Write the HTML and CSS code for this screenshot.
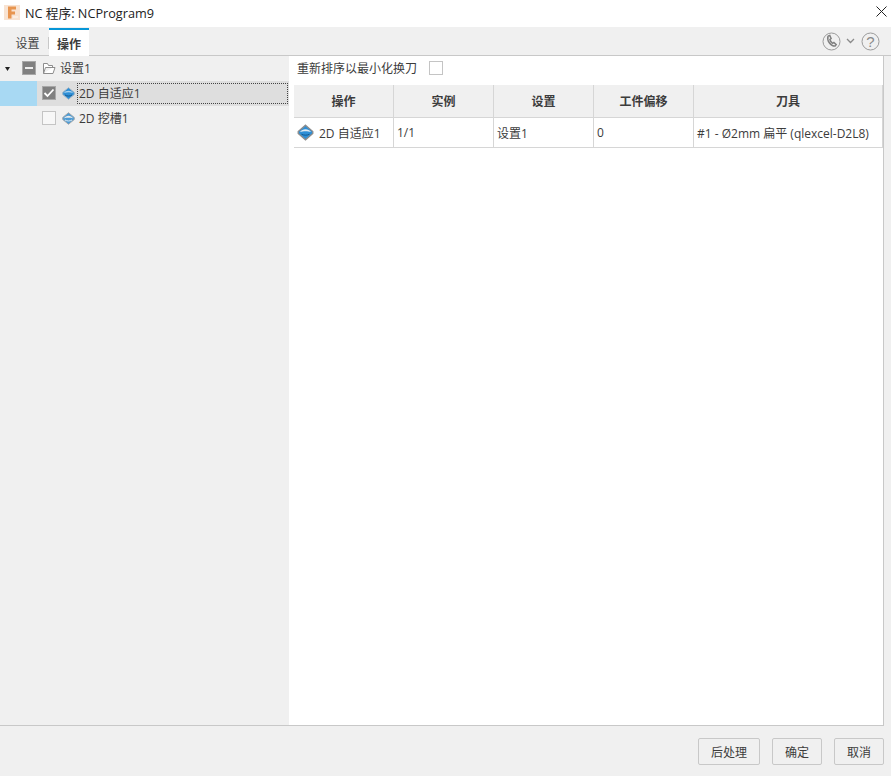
FILE: index.html
```html
<!DOCTYPE html>
<html lang="zh">
<head>
<meta charset="utf-8">
<title>NC 程序</title>
<link rel="stylesheet" href="styles.css">
</head>
<body>
<div class="window">
  <header class="titlebar">
    <svg class="app-icon" width="16" height="15" viewBox="0 0 16 15"><rect width="16" height="15" fill="#f8e3d2"/><path d="M4 1.500h8v3H7.500v2H11v3H7.500v4H4z" fill="#e8954f"/><rect x="9" y="11" width="5" height="2" fill="#fbeee2"/></svg>
    <span class="title">NC 程序: NCProgram9</span>
    <svg class="close" width="11" height="11" viewBox="0 0 11 11"><path d="M.5.500l10 10M10.500.500l-10 10" stroke="#222" stroke-width="1" fill="none"/></svg>
  </header>
  <nav class="tabbar">
    <span class="tab">设置</span>
    <span class="tab-sep"></span>
    <span class="tab active">操作</span>
    <span class="tab-tools">
      <svg width="19" height="19" viewBox="0 0 19 19"><circle cx="9.500" cy="9.500" r="8.500" fill="none" stroke="#9a9a9a"/><path d="M5.800 4.200l2-.7 1.300 3-1.200 1c.3 1.600 1.500 3 2.800 3.800l1.200-.9 2.300 2.200-1.100 1.500c-4.100.2-8.500-5.100-7.100-9.900z" fill="none" stroke="#808080" stroke-width="1.500"/></svg>
      <svg class="chev" width="9" height="6" viewBox="0 0 9 6"><path d="M1 1l3.500 3.500L8 1" fill="none" stroke="#8a8a8a" stroke-width="1.300"/></svg>
      <svg class="help" width="19" height="19" viewBox="0 0 19 19"><circle cx="9.500" cy="9.500" r="8.500" fill="none" stroke="#9a9a9a"/><text x="9.500" y="15" text-anchor="middle" class="help-q">?</text></svg>
    </span>
  </nav>
  <main class="panes">
    <aside class="tree">
      <div class="tree-row">
        <svg class="caret" width="5" height="4" viewBox="0 0 5 4"><path d="M0 0h5L2.500 4z" fill="#222"/></svg>
        <span class="check mixed"><span class="dash"></span></span>
        <svg class="folder" width="14" height="13" viewBox="0 0 14 13"><path d="M1.500 11.500V1.500h4l1 2h4v2M1.500 11.500h9.500l2-6H3.500z" fill="#fff" stroke="#8d8d8d"/></svg>
        <span class="tree-label">设置1</span>
      </div>
      <div class="tree-row selected">
        <span class="sel-bar"></span>
        <span class="check checked"><svg width="12" height="10" viewBox="0 0 12 10"><path d="M1.500 5l3 3 6-6.500" fill="none" stroke="#fff" stroke-width="1.800"/></svg></span>
        <svg class="op" width="13" height="13" viewBox="0 0 13 13"><path d="M6.500.700L12.300 5.500V7.500L6.500 12.300.700 7.500V5.500z" fill="#2f8fd6" stroke="#9fb4c4"/><path d="M2 6c1.800-3 7.200-3 9 0-2.600-.9-6.400-.9-9 0z" fill="#a9d3f0"/><path d="M3 8c2.200 1.400 4.800 1.400 7 0" stroke="#14598f" fill="none"/></svg>
        <span class="tree-label focus">2D 自适应1</span>
      </div>
      <div class="tree-row sub">
        <span class="check"></span>
        <svg class="op" width="13" height="13" viewBox="0 0 13 13"><path d="M6.500.700L12.300 5.500V7.500L6.500 12.300.700 7.500V5.500z" fill="#4d9bd4" stroke="#a4a8ab"/><path d="M2 6.200c1.800-3.400 7.200-3.400 9 0-2.600-.6-6.400-.6-9 0z" fill="#e8ebed"/><path d="M3 8c2.200 1.300 4.800 1.300 7 0" stroke="#e0ecf4" fill="none"/></svg>
        <span class="tree-label">2D 挖槽1</span>
      </div>
    </aside>
    <section class="content">
      <div class="option">
        <span>重新排序以最小化换刀</span>
        <span class="check plain"></span>
      </div>
      <table class="grid">
        <thead>
          <tr><th class="col">操作</th><th class="col">实例</th><th class="col">设置</th><th class="col">工件偏移</th><th>刀具</th></tr>
        </thead>
        <tbody>
          <tr>
            <td><span class="op-cell"><svg width="17" height="17" viewBox="0 0 17 17"><path d="M8.500 1.200L15.800 7.500V9.500L8.500 15.800 1.200 9.500V7.500z" fill="#2f8fd6" stroke="#8c8c8c" stroke-width="1.300"/><path d="M3 8c2.500-3.600 8.500-3.600 11 0-3-1-8-1-11 0z" fill="#e3ebf1"/><path d="M4.500 10.200c2.300 1.300 5.700 1.300 8 0" stroke="#14598f" fill="none"/></svg>2D 自适应1</span></td>
            <td>1/1</td>
            <td>设置1</td>
            <td>0</td>
            <td>#1 - Ø2mm 扁平 (qlexcel-D2L8)</td>
          </tr>
        </tbody>
      </table>
    </section>
  </main>
  <footer class="footer">
    <button class="btn wide">后处理</button>
    <button class="btn">确定</button>
    <button class="btn">取消</button>
  </footer>
</div>
</body>
</html>
```
FILE: styles.css
```css
* { box-sizing: border-box; }
html, body { margin: 0; padding: 0; }
body {
  width: 891px;
  height: 776px;
  overflow: hidden;
  font-family: "Open Sans", "Noto Sans CJK SC", sans-serif;
  font-size: 12px;
  color: #3c3c3c;
  background: #f0f0f0;
}
.window { display: flex; flex-direction: column; height: 776px; }
.titlebar {
  height: 27px;
  background: #fff;
  display: flex;
  align-items: center;
  padding: 0 4px 3px 4px;
  flex: none;
}
.title { margin-left: 5px; color: #222; font-size: 12.700px; flex: 1; }
.close { margin-bottom: 2px; }
.tabbar {
  height: 29px;
  flex: none;
  display: flex;
  align-items: stretch;
  background: #f0f0f0;
  padding-right: 11px;
  border-bottom: 1px solid #c8c8c8;
}
.tab {
  width: 33px;
  margin-left: 11px;
  display: flex;
  align-items: center;
  justify-content: center;
  padding-top: 3px;
  color: #444;
}
.tab-sep { width: 1px; height: 12px; margin: 10px 0 0 4px; background: #c8c8c8; }
.tab.active {
  width: 40px;
  margin: 1px 0 -1px 0;
  background: #fff;
  border-top: 2px solid #0696d7;
  font-weight: 700;
  color: #3c3c3c;
  padding-top: 1px;
}
.tab-tools { margin-left: auto; display: flex; align-items: center; padding-top: 0; }
.chev { margin: 0 6px 0 5px; }
.help-q { font-family: "Liberation Sans", sans-serif; font-size: 15px; fill: #8a8a8a; }
.panes {
  flex: 1;
  display: flex;
  min-height: 0;
  margin-right: 7px;
  border-right: 1px solid #c8c8c8;
  border-bottom: 1px solid #c8c8c8;
}
.tree { width: 289px; flex: none; background: #f0f0f0; }
.tree-row {
  height: 25px;
  display: flex;
  align-items: center;
  padding-left: 42px;
}
.tree-row:first-child { padding-left: 5px; }
.caret { margin-right: 12px; }
.tree-row:first-child .check { margin-right: 6px; }
.folder { margin-right: 2px; }
.tree-row.selected { background: #dedede; padding-left: 0; }
.sel-bar { width: 37px; height: 25px; background: #a8d9f3; margin-right: 5px; }
.tree-row.selected .check, .tree-row.sub .check { margin-right: 6px; }
.tree .check { margin-bottom: 1px; }
.op { margin-right: 2px; margin-bottom: 1px; }
.tree-label { color: #3c3c3c; padding: 0 2px; margin-bottom: 2px; }
.tree-label.focus {
  flex: 1;
  height: 21px;
  line-height: 19px;
  border: 1px dotted #444;
  margin: 0 1px 0 0;
  padding: 0 1px;
}
.check {
  width: 14px;
  height: 14px;
  border: 1px solid #c4c4c4;
  background: #f7f7f7;
  flex: none;
  display: flex;
  align-items: center;
  justify-content: center;
}
.check.mixed, .check.checked { background: #808080; border-color: #a8a8a8; }
.dash { width: 8px; height: 2px; background: #eee; }
.check.plain { background: #fff; margin-left: 12px; }
.content { flex: 1; background: #fff; padding: 0 0 0 5px; min-width: 0; }
.option {
  height: 29px;
  display: flex;
  align-items: center;
  padding: 0 0 5px 3px;
  color: #3c3c3c;
}
.grid {
  border-collapse: separate;
  border-spacing: 0;
  table-layout: fixed;
  width: 589px;
}
.grid th {
  height: 33px;
  background: #f0f0f0;
  font-weight: 700;
  text-align: center;
  border-right: 1px solid #d6d6d6;
  border-bottom: 1px solid #d6d6d6;
  padding: 0;
  color: #3c3c3c;
}
.col { width: 100px; }
.grid td {
  height: 30px;
  padding: 0 0 0 3px;
  border-right: 1px solid #d6d6d6;
  border-bottom: 1px solid #d6d6d6;
  white-space: nowrap;
  color: #3c3c3c;
}
.op-cell { display: flex; align-items: center; gap: 5px; }
.footer {
  height: 50px;
  flex: none;
  display: flex;
  justify-content: flex-end;
  gap: 12px;
  padding: 12px 7px 0 0;
}
.btn {
  width: 50px;
  height: 27px;
  font: inherit;
  color: #3c3c3c;
  background: #f0f0f0;
  border: 1px solid #c8c8c8;
  border-radius: 2px;
  padding: 0;
}
.btn.wide { width: 62px; }
```
